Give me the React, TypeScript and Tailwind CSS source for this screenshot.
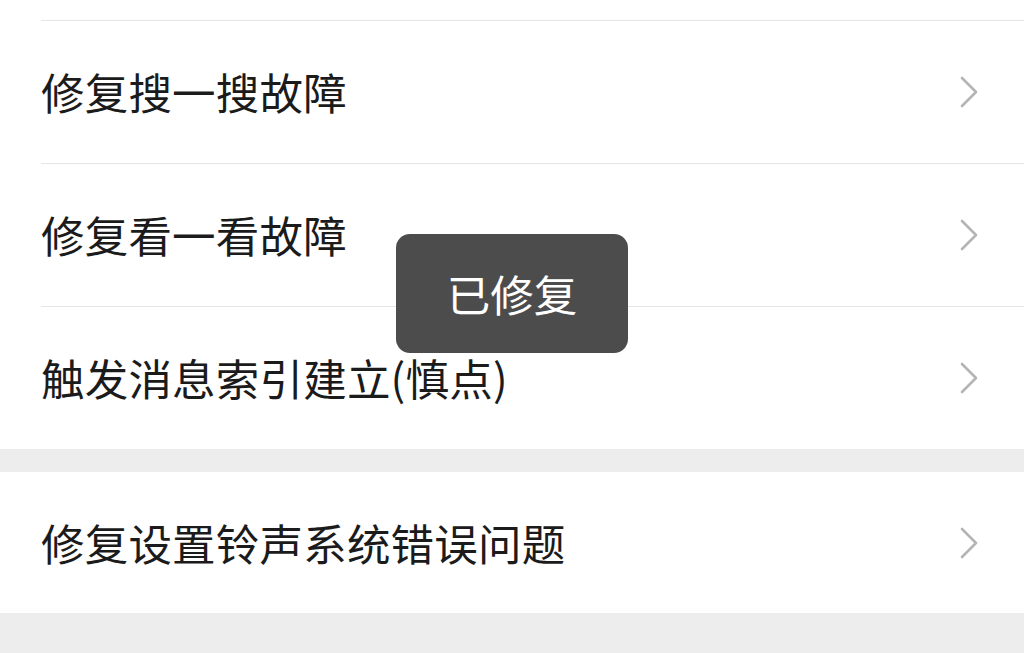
import React from "react";

const FONT = {
  fontFamily: '"Noto Sans CJK SC", "Noto Sans", sans-serif',
};

function Chevron() {
  return (
    <svg width="20" height="34" viewBox="0 0 20 34" fill="none" className="shrink-0">
      <polyline
        points="3,3 17,17 3,31"
        stroke="#b4b4b4"
        strokeWidth="2.6"
        strokeLinecap="round"
        strokeLinejoin="round"
      />
    </svg>
  );
}

function Row({ label, divider = true, height = "h-[143px]" }: { label: string; divider?: boolean; height?: string }) {
  return (
    <div className="pl-[41px]">
      <div
        className={`flex items-center justify-between pr-[45px] ${height} ${
          divider ? "border-t border-[#e6e6e6]" : ""
        }`}
      >
        <span className="text-[43.5px] leading-none text-[#1b1b1b] tracking-[0.2px]">{label}</span>
        <Chevron />
      </div>
    </div>
  );
}

export default function App() {
  return (
    <div className="relative h-[653px] w-[1024px] overflow-hidden bg-[#ededed]" style={FONT}>
      <div className="bg-white">
        <div className="h-[20px]" />
        <Row label="修复搜一搜故障" />
        <Row label="修复看一看故障" />
        <Row label="触发消息索引建立(慎点)" />
      </div>
      <div className="h-[23px]" />
      <div className="bg-white">
        <Row label="修复设置铃声系统错误问题" divider={false} height="h-[141px]" />
      </div>

      <div className="absolute left-[396px] top-[234px] flex h-[119px] w-[232px] items-center justify-center rounded-[14px] bg-[#4c4c4c]">
        <span className="text-[43.5px] leading-none text-white">已修复</span>
      </div>
    </div>
  );
}
